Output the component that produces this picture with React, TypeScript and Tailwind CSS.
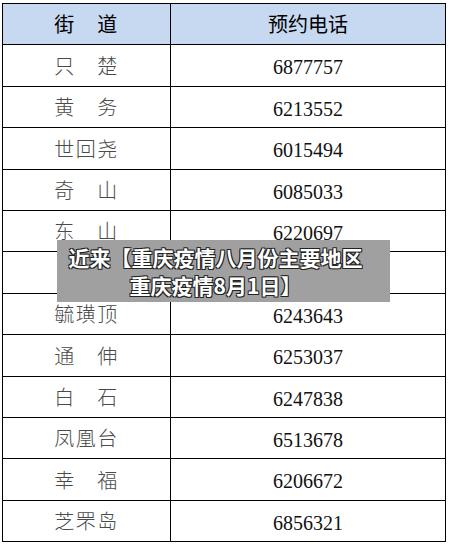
import React from "react";

const rows: { name: string; phone: string; h: string }[] = [
  { name: "只　楚", phone: "6877757", h: "h-[42px]" },
  { name: "黄　务", phone: "6213552", h: "h-[41px]" },
  { name: "世回尧", phone: "6015494", h: "h-[42px]" },
  { name: "奇　山", phone: "6085033", h: "h-[41px]" },
  { name: "东　山", phone: "6220697", h: "h-[41px]" },
  { name: "", phone: "", h: "h-[42px]" },
  { name: "毓璜顶", phone: "6243643", h: "h-[41px]" },
  { name: "通　伸", phone: "6253037", h: "h-[42px]" },
  { name: "白　石", phone: "6247838", h: "h-[41px]" },
  { name: "凤凰台", phone: "6513678", h: "h-[41px]" },
  { name: "幸　福", phone: "6206672", h: "h-[42px]" },
  { name: "芝罘岛", phone: "6856321", h: "h-[41px]" },
];

export default function App() {
  return (
    <div className="relative w-[449px] h-[544px] bg-white overflow-hidden">
      <div className="ml-[2px] mt-[3px] w-[444px] border-t border-l border-r border-black">
        <div className="flex h-[41px] border-b border-black bg-[#c6d9f0]">
          <div className="w-[168px] border-r border-black flex items-center justify-center text-[20px] text-black tracking-[1.5px] [font-family:'Noto_Sans_CJK_SC',sans-serif]">
            街　道
          </div>
          <div className="flex-1 flex items-center justify-center text-[20px] text-black [font-family:'Noto_Sans_CJK_SC',sans-serif]">
            预约电话
          </div>
        </div>
        {rows.map((r, i) => (
          <div key={i} className={`flex border-b border-black ${r.h}`}>
            <div className="w-[168px] border-r border-black flex items-center justify-center text-[20px] text-[#4a4a4a] font-light tracking-[1.5px] [font-family:'Noto_Sans_CJK_SC',sans-serif]">
              {r.name}
            </div>
            <div className="flex-1 flex items-center justify-center pt-[3px] text-[20px] text-[#111] [font-family:'Liberation_Serif',serif]">
              {r.phone}
            </div>
          </div>
        ))}
      </div>
      <div className="absolute left-[57px] top-[240px] w-[333px] h-[62px] bg-[#a0a0a0] pr-[16px] flex flex-col items-center justify-center text-white font-bold text-[21px] leading-[28px] [font-family:'Noto_Sans_CJK_SC',sans-serif] [text-shadow:1px_1px_0_#222,-1px_-1px_0_#222,1px_-1px_0_#222,-1px_1px_0_#222]">
        <div className="whitespace-nowrap">近来【重庆疫情八月份主要地区</div>
        <div className="whitespace-nowrap">重庆疫情8月1日】</div>
      </div>
    </div>
  );
}
